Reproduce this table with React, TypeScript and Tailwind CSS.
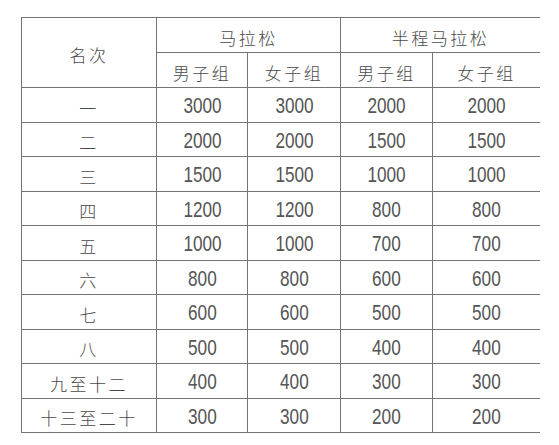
import { Fragment } from "react";

const rows: [string, string, string, string, string][] = [
  ["一", "3000", "3000", "2000", "2000"],
  ["二", "2000", "2000", "1500", "1500"],
  ["三", "1500", "1500", "1000", "1000"],
  ["四", "1200", "1200", "800", "800"],
  ["五", "1000", "1000", "700", "700"],
  ["六", "800", "800", "600", "600"],
  ["七", "600", "600", "500", "500"],
  ["八", "500", "500", "400", "400"],
  ["九至十二", "400", "400", "300", "300"],
  ["十三至二十", "300", "300", "200", "200"],
];

const cjk = "pt-[5px] font-['Noto_Sans_CJK_SC',sans-serif] text-[17px] tracking-[2.5px] font-light";

const Cell = ({ children, className = "" }: { children: React.ReactNode; className?: string }) => (
  <div className={`flex items-center justify-center bg-white text-[#4a4a4a] ${className}`}>{children}</div>
);

const Num = ({ v }: { v: string }) => (
  <span className="inline-block scale-x-[0.78] pt-[3px] font-['Liberation_Sans',sans-serif] text-[22px] leading-none text-[#555]">
    {v}
  </span>
);

export default function App() {
  return (
    <div className="h-[445px] w-[559px] bg-white pl-[21px] pt-[17px]">
      <div className="grid w-[519px] grid-cols-[134px_90px_92px_91px_107px] grid-rows-[34px_34px_repeat(10,33.5px)] gap-px bg-[#747474] p-px">
        <Cell className={`row-span-2 ${cjk}`}>名次</Cell>
        <Cell className={`col-span-2 ${cjk}`}>马拉松</Cell>
        <Cell className={`col-span-2 ${cjk}`}>半程马拉松</Cell>
        <Cell className={cjk}>男子组</Cell>
        <Cell className={cjk}>女子组</Cell>
        <Cell className={cjk}>男子组</Cell>
        <Cell className={cjk}>女子组</Cell>
        {rows.map((r) => (
          <Fragment key={r[0]}>
            <Cell className={cjk}>{r[0]}</Cell>
            {r.slice(1).map((v, i) => (
              <Cell key={i}>
                <Num v={v} />
              </Cell>
            ))}
          </Fragment>
        ))}
      </div>
    </div>
  );
}
